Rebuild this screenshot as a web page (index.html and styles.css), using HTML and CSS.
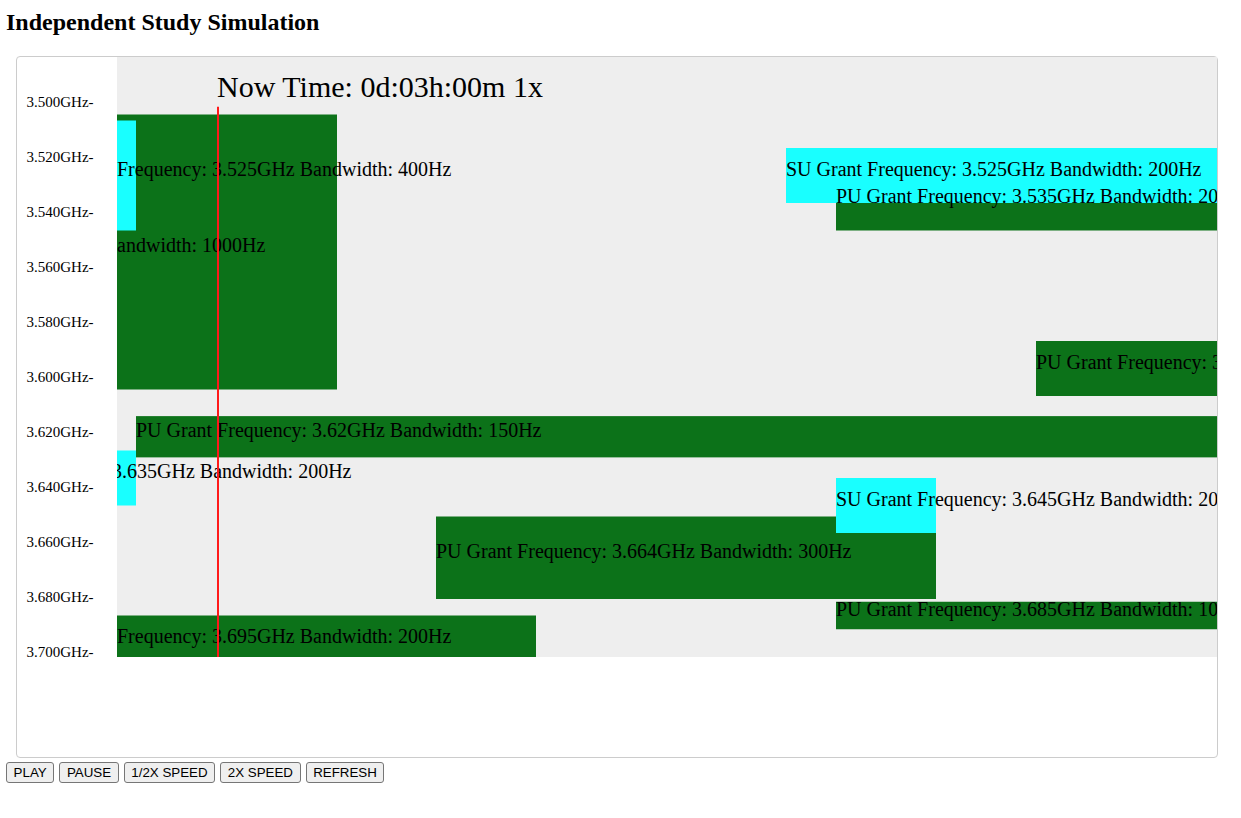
FILE: index.html
```html
<!DOCTYPE html>
<html lang="en">
<head>
<meta charset="utf-8">
<title>Independent Study Simulation</title>
<link rel="stylesheet" href="styles.css">
</head>
<body>
<h2 class="title">Independent Study Simulation</h2>
<div class="chart">
  <svg class="chart-svg" width="1200" height="700" viewBox="0 0 1200 700" xmlns="http://www.w3.org/2000/svg">
    <defs>
      <clipPath id="plotclip"><rect x="100" y="0" width="1100" height="600"/></clipPath>
    </defs>
    <g class="axis">
      <text x="9.5" y="49.75">3.500GHz-</text>
      <text x="9.5" y="104.75">3.520GHz-</text>
      <text x="9.5" y="159.75">3.540GHz-</text>
      <text x="9.5" y="214.75">3.560GHz-</text>
      <text x="9.5" y="269.75">3.580GHz-</text>
      <text x="9.5" y="324.75">3.600GHz-</text>
      <text x="9.5" y="379.75">3.620GHz-</text>
      <text x="9.5" y="434.75">3.640GHz-</text>
      <text x="9.5" y="489.75">3.660GHz-</text>
      <text x="9.5" y="544.75">3.680GHz-</text>
      <text x="9.5" y="599.75">3.700GHz-</text>
    </g>
    <g clip-path="url(#plotclip)">
      <rect class="plot-bg" x="100" y="0" width="1100" height="600"/>
      <rect class="pu" x="40" y="57.5" width="280" height="275"/>
      <rect class="pu" x="819" y="118.5" width="400" height="55"/>
      <rect class="pu" x="1019" y="284" width="200" height="55"/>
      <rect class="pu" x="119" y="359.125" width="1100" height="41.25"/>
      <rect class="pu" x="419" y="459.5" width="500" height="82.5"/>
      <rect class="pu" x="819" y="544.75" width="400" height="27.5"/>
      <rect class="pu" x="19" y="558.5" width="500" height="55"/>
      <rect class="su" x="19" y="63.5" width="100" height="110"/>
      <rect class="su" x="769" y="91" width="450" height="55"/>
      <rect class="su" x="-81" y="393.5" width="200" height="55"/>
      <rect class="su" x="819" y="421" width="100" height="55"/>
      <g class="grant-label">
        <text x="18.9" y="118.5">SU Grant Frequency: 3.525GHz Bandwidth: 400Hz</text>
        <text x="248.4" y="195" text-anchor="end">PU Grant Frequency: 3.553GHz Bandwidth: 1000Hz</text>
        <text x="769" y="118.5">SU Grant Frequency: 3.525GHz Bandwidth: 200Hz</text>
        <text x="819" y="146">PU Grant Frequency: 3.535GHz Bandwidth: 200Hz</text>
        <text x="1019" y="311.5">PU Grant Frequency: 3.595GHz Bandwidth: 200Hz</text>
        <text x="119" y="379.75">PU Grant Frequency: 3.62GHz Bandwidth: 150Hz</text>
        <text x="-81" y="421">SU Grant Frequency: 3.635GHz Bandwidth: 200Hz</text>
        <text x="819" y="448.5">SU Grant Frequency: 3.645GHz Bandwidth: 200Hz</text>
        <text x="419" y="500.75">PU Grant Frequency: 3.664GHz Bandwidth: 300Hz</text>
        <text x="819" y="558.5">PU Grant Frequency: 3.685GHz Bandwidth: 100Hz</text>
        <text x="18.9" y="586">PU Grant Frequency: 3.695GHz Bandwidth: 200Hz</text>
      </g>
      <line class="now-line" x1="201" y1="49.75" x2="201" y2="600"/>
      <text class="now-time" x="200" y="40">Now Time: 0d:03h:00m 1x</text>
    </g>
  </svg>
</div>
<div class="controls">
  <button class="btn" type="button">PLAY</button>
  <button class="btn" type="button">PAUSE</button>
  <button class="btn" type="button">1/2X SPEED</button>
  <button class="btn" type="button">2X SPEED</button>
  <button class="btn" type="button">REFRESH</button>
</div>
</body>
</html>
```

FILE: styles.css
```css
html, body {
  margin: 0;
  padding: 0;
  background: #ffffff;
}

body {
  padding: 8px 6px;
  font-family: "Liberation Serif", "Times New Roman", serif;
  color: #000;
}

.title {
  margin: 0;
  font-size: 24px;
  line-height: 28px;
  font-weight: bold;
}

.chart {
  margin: 20px 0 0 10px;
  width: 1200px;
  height: 700px;
  border: 1px solid #cccccc;
  border-radius: 4px;
}

.chart-svg {
  display: block;
  font-family: "Liberation Serif", "Times New Roman", serif;
}

.axis text {
  font-size: 15px;
  fill: #000;
}

.plot-bg {
  fill: #eeeeee;
}

.pu {
  fill: #0c7219;
}

.su {
  fill: #19ffff;
}

.grant-label text {
  font-size: 20px;
  fill: #000;
}

.now-line {
  stroke: #ff1a1a;
  stroke-width: 2;
}

.now-time {
  font-size: 30px;
  fill: #000;
}

.controls {
  display: flex;
  gap: 5px;
  margin-top: 4px;
}

.btn {
  font-family: "Liberation Sans", Arial, sans-serif;
  font-size: 13.33px;
  line-height: 15px;
  padding: 2px 6.6px;
  border: 1px solid #767676;
  border-radius: 3px;
  background: #efefef;
  color: #000;
}
```
